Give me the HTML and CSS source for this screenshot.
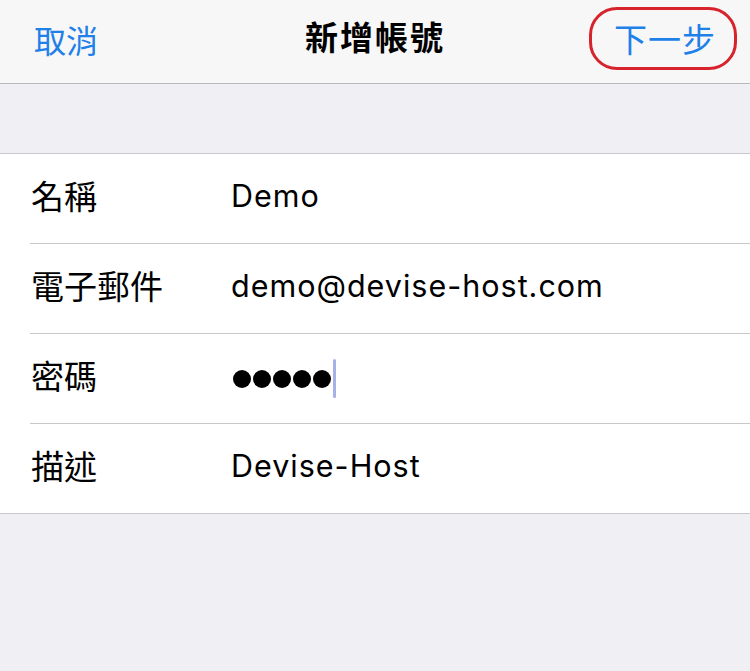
FILE: index.html
```html
<!DOCTYPE html>
<html>
<head>
	<title>新增帳號</title>
	<meta charset="utf-8">
	<link rel="stylesheet" href="styles.css">
</head>
<body>
	<header class="nav">
		<button class="nav-btn cancel">取消</button>
		<h1 class="title">新增帳號</h1>
		<button class="nav-btn next">下一步</button>
	</header>

	<div class="spacer"></div>

	<ul class="form">
		<li class="row">
			<span class="label">名稱</span>
			<span class="value">Demo</span>
		</li>
		<li class="row">
			<span class="label">電子郵件</span>
			<span class="value">demo@devise-host.com</span>
		</li>
		<li class="row">
			<span class="label">密碼</span>
			<span class="value dots"><i></i><i></i><i></i><i></i><i></i><b class="caret"></b></span>
		</li>
		<li class="row">
			<span class="label">描述</span>
			<span class="value">Devise-Host</span>
		</li>
	</ul>
</body>
</html>
```

FILE: styles.css
```css
* {
	margin: 0;
	padding: 0;
	box-sizing: border-box;
}

body {
	width: 750px;
	height: 671px;
	background-color: #efeff4;
	font-family: "Noto Sans CJK TC", "Liberation Sans", sans-serif;
	color: #000;
	overflow: hidden;
}

.nav {
	height: 84px;
	background-color: #f7f7f8;
	border-bottom: 1px solid #b8b8bc;
	display: flex;
	align-items: center;
	justify-content: space-between;
	padding: 0 13px 0 34px;
	position: relative;
}

.nav-btn {
	background: none;
	border: none;
	font-family: inherit;
	font-size: 32px;
	color: #1f80e8;
	line-height: 1;
	margin-top: -6px;
}

.next {
	border: 3px solid #d7232b;
	border-radius: 28px;
	width: 148px;
	height: 63px;
	margin-top: -7px;
	padding-left: 4px;
	font-size: 33px;
	letter-spacing: 1px;
}

.title {
	position: absolute;
	left: 0;
	right: 0;
	top: 20px;
	text-align: center;
	font-size: 33px;
	font-weight: bold;
	line-height: 1;
	letter-spacing: 2px;
	pointer-events: none;
}

.spacer {
	height: 69px;
}

.form {
	list-style: none;
	background-color: #fff;
	border-top: 1px solid #c8c7cc;
	border-bottom: 1px solid #c8c7cc;
	padding-left: 30px;
}

.row {
	height: 90px;
	display: flex;
	align-items: center;
	border-bottom: 1px solid #c8c7cc;
}

.row:last-child {
	border-bottom: none;
	height: 89px;
}

.label {
	width: 201px;
	padding-left: 1px;
	font-size: 33px;
	line-height: 1;
	margin-top: -6px;
}

.value {
	font-family: Inter, "Liberation Sans", sans-serif;
	font-size: 30.5px;
	letter-spacing: 1px;
	line-height: 1;
	margin-top: -4px;
}

.dots {
	display: flex;
	align-items: center;
	gap: 2px;
	padding-left: 2px;
	margin-top: 0;
}

.dots i {
	display: block;
	width: 18px;
	height: 18px;
	border-radius: 50%;
	background-color: #000;
}

.caret {
	display: block;
	width: 3px;
	height: 39px;
	margin-left: 0;
	background-color: #a7b1e6;
	border-radius: 2px;
}
```
